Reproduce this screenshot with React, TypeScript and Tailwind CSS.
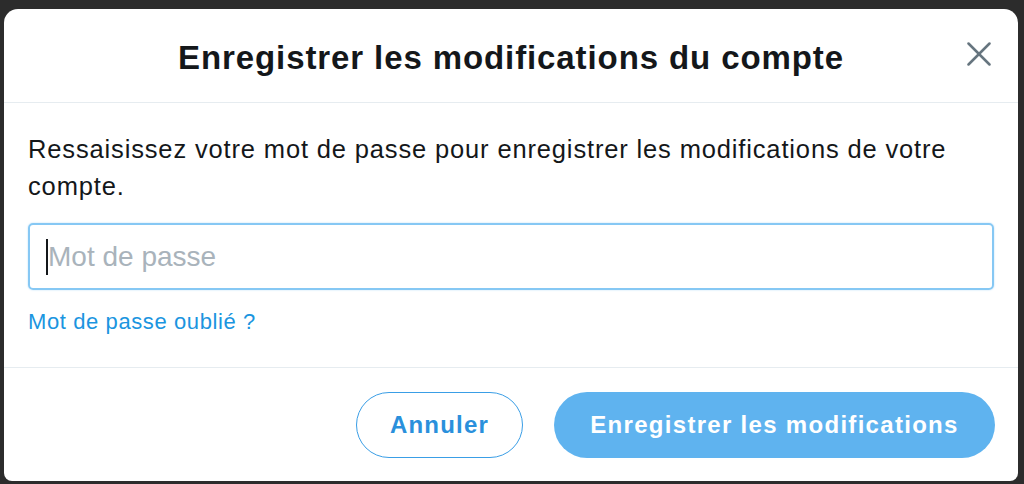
export default function App() {
  return (
    <div className="h-[484px] w-[1024px] overflow-hidden bg-[#2c2c2c] pl-[4px] pt-[9px] font-['Liberation_Sans',Arial,sans-serif]">
      <div className="flex h-[472px] w-[1014px] flex-col rounded-t-[14px] rounded-b-[8px] bg-white">
        {/* Header */}
        <div className="relative flex h-[94px] items-center justify-center border-b border-[#e6ecf0]">
          <h1 className="pt-[4px] text-[33px] font-bold tracking-[0.9px] text-[#14171a]">
            Enregistrer les modifications du compte
          </h1>
          <button className="absolute left-[963px] top-[33px]">
            <svg width="24" height="24" viewBox="0 0 24 24" fill="none" stroke="#66757f" strokeWidth="2.5" strokeLinecap="round">
              <line x1="1.5" y1="1.5" x2="22.5" y2="22.5" />
              <line x1="22.5" y1="1.5" x2="1.5" y2="22.5" />
            </svg>
          </button>
        </div>

        {/* Body */}
        <div className="flex flex-col px-[24px] pt-[28px]">
          <p className="text-[25.5px] leading-[37px] tracking-[0.85px] text-[#14171a]">
            Ressaisissez votre mot de passe pour enregistrer les modifications de votre compte.
          </p>
          <div className="mt-[18px] flex h-[67px] items-center rounded-[5px] border-2 border-[#86c8f4] pl-[16px] shadow-[0_0_2px_#b5dcf8]">
            <span className="h-[36px] w-[2px] bg-[#14171a]" />
            <span className="text-[28px] text-[#a9b3bb]">Mot de passe</span>
          </div>
          <a className="mt-[19px] text-[22px] leading-[26px] tracking-[0.6px] text-[#1b95e0]">Mot de passe oublié ?</a>
        </div>

        {/* Footer */}
        <div className="mt-[32px] flex flex-1 items-start justify-end gap-[31px] border-t border-[#e6ecf0] pr-[23px] pt-[24px]">
          <button className="h-[66px] w-[167px] rounded-full border-[1.5px] border-[#3a9ee6] text-[24px] font-bold tracking-[1.2px] text-[#2a90dc]">
            Annuler
          </button>
          <button className="h-[66px] w-[441px] rounded-full bg-[#5fb3ef] text-[24px] font-bold tracking-[1.3px] text-white">
            Enregistrer les modifications
          </button>
        </div>
      </div>
    </div>
  );
}
